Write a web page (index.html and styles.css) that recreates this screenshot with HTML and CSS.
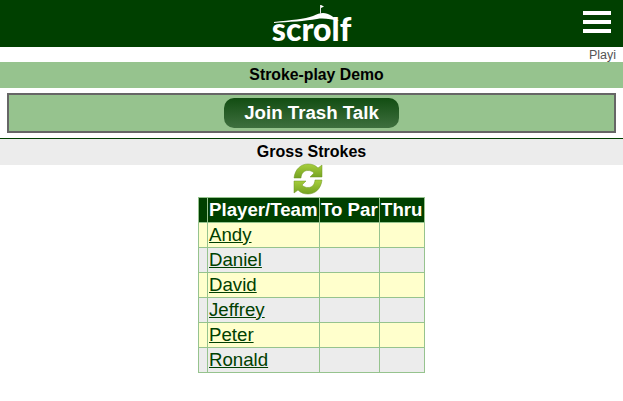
FILE: index.html
```html
<!DOCTYPE html>
<html lang="en">
<head>
    <meta charset="UTF-8">
    <title>Stroke-play Demo</title>
    <link rel="stylesheet" href="styles.css">
</head>
<body>

<div class="topbar">
    <div class="logo">
        <svg class="logo-hill" width="82" height="24" viewBox="0 0 82 24">
            <path d="M3 22 C20 20 34 19 42 16 C46 14 49 13 52 13 C58 13 62 17 68 21 C60 19 52 18 46 19 C34 21 18 22 3 23 Z" fill="#fff"/>
            <line x1="49.500" y1="14" x2="49.500" y2="5" stroke="#ddd" stroke-width="1"/>
            <path d="M50 5 L53 6.500 L50 8 Z" fill="#fff"/>
        </svg>
        <span class="logo-text">scrolf</span>
    </div>
    <button class="menu-btn" aria-label="Menu">
        <span></span>
        <span></span>
        <span></span>
    </button>
</div>

<div class="ticker">Playi</div>
<div class="title-bar">Stroke-play Demo</div>

<div class="talk-box">
    <a class="talk-btn" href="#">Join Trash Talk</a>
</div>

<div class="section-bar">Gross Strokes</div>

<div class="refresh">
    <svg width="32" height="32" viewBox="0 0 32 32">
        <defs>
            <linearGradient id="arrowFill" x1="0" y1="0" x2="0" y2="1">
                <stop offset="0" stop-color="#a8cf3c"/>
                <stop offset="1" stop-color="#74a222"/>
            </linearGradient>
        </defs>
        <path d="M2 15 C3 6 9 1 16 1 C20 1 23 2 26 5 L30 2 L30 14 L18 14 L22 10 C20 8 18 7.500 16 7.500 C12 7.500 9.500 10 9 15 Z" fill="url(#arrowFill)" stroke="#6f9425" stroke-width=".5"/>
        <path d="M30 17 C29 26 23 31 16 31 C12 31 9 30 6 27 L2 30 L2 18 L14 18 L10 22 C12 24 14 24.500 16 24.500 C20 24.500 22.500 22 23 17 Z" fill="url(#arrowFill)" stroke="#6f9425" stroke-width=".5"/>
    </svg>
</div>

<table class="scores">
    <thead>
        <tr>
            <th class="col-mark"></th>
            <th class="col-player">Player/Team</th>
            <th class="col-par">To Par</th>
            <th class="col-thru">Thru</th>
        </tr>
    </thead>
    <tbody>
        <tr><td></td><td><a href="#">Andy</a></td><td></td><td></td></tr>
        <tr><td></td><td><a href="#">Daniel</a></td><td></td><td></td></tr>
        <tr><td></td><td><a href="#">David</a></td><td></td><td></td></tr>
        <tr><td></td><td><a href="#">Jeffrey</a></td><td></td><td></td></tr>
        <tr><td></td><td><a href="#">Peter</a></td><td></td><td></td></tr>
        <tr><td></td><td><a href="#">Ronald</a></td><td></td><td></td></tr>
    </tbody>
</table>

</body>
</html>
```

FILE: styles.css
```css
body {
    margin: 0;
    font-family: "Liberation Sans", Arial, sans-serif;
    background-color: white;
    color: black;
    overflow: hidden;
}

.topbar {
    height: 47px;
    background-color: #004000;
    display: flex;
    justify-content: center;
    position: relative;
}

.logo {
    width: 82px;
    height: 47px;
    position: relative;
}

.logo-hill {
    position: absolute;
    left: 0;
    top: 0;
}

.logo-text {
    position: absolute;
    left: 0;
    top: 11px;
    width: 82px;
    text-align: center;
    font-family: Lato, sans-serif;
    font-weight: 900;
    font-size: 32px;
    line-height: 36px;
    color: white;
}

.menu-btn {
    position: absolute;
    top: 11px;
    right: 12px;
    width: 28px;
    height: 22px;
    padding: 0;
    background: transparent;
    border: none;
    display: flex;
    flex-direction: column;
    justify-content: space-between;
}

.menu-btn span {
    display: block;
    width: 28px;
    height: 4px;
    background-color: white;
}

.ticker {
    height: 15px;
    font-size: 12.500px;
    line-height: 16px;
    color: #555;
    text-align: right;
    padding-right: 7px;
    overflow: hidden;
}

.title-bar {
    height: 26px;
    line-height: 26px;
    padding-left: 10px;
    background-color: #96c38e;
    text-align: center;
    font-weight: bold;
    font-size: 15.800px;
}

.talk-box {
    margin: 5px 7px;
    height: 36px;
    border: 2px solid #666;
    background-color: #96c38e;
    display: flex;
    align-items: center;
    justify-content: center;
}

.talk-btn {
    width: 175px;
    height: 30px;
    line-height: 30px;
    border-radius: 10px;
    background: linear-gradient(#124d12, #3f6f3f);
    color: white;
    font-weight: bold;
    font-size: 18.700px;
    text-align: center;
    text-decoration: none;
}

.section-bar {
    height: 26px;
    line-height: 26px;
    border-top: 1px solid #004000;
    background-color: #ececec;
    text-align: center;
    font-weight: bold;
    font-size: 16px;
}

.refresh {
    height: 32px;
    margin-top: -2px;
    padding-right: 8px;
    display: flex;
    justify-content: center;
}

.scores {
    margin: 2px auto 0;
    border-collapse: collapse;
    font-size: 18.670px;
    table-layout: fixed;
    width: 227px;
}

.scores th,
.scores td {
    border: 1px solid #96c38e;
    padding: 0 1px;
    height: 24px;
    text-align: left;
    white-space: nowrap;
    overflow: hidden;
}

.scores th {
    background-color: #004000;
    color: white;
}

.col-mark {
    width: 6px;
}

.col-player {
    width: 109px;
}

.col-par {
    width: 57px;
}

.col-thru {
    width: 42px;
}

.scores tbody tr:nth-child(odd) td {
    background-color: #ffffcc;
}

.scores tbody tr:nth-child(even) td {
    background-color: #ececec;
}

.scores a {
    color: #004000;
}
```
